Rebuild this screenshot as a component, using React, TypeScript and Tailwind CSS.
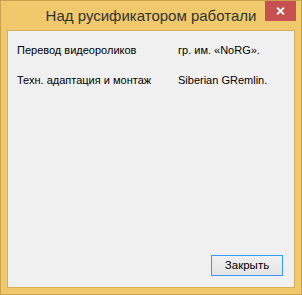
import React from 'react';

const rows = [
  { role: 'Перевод видеороликов', who: 'гр. им. «NoRG».' },
  { role: 'Техн. адаптация и монтаж', who: 'Siberian GRemlin.' },
];

export default function App() {
  return (
    <div className="w-[302px] h-[295px] flex flex-col border border-[#caa24f] bg-[#f0c96c] font-['Liberation_Sans',Arial,sans-serif]">
      {/* Title bar */}
      <div className="relative h-[29px] shrink-0 flex items-center justify-center">
        <span className="text-[15px] text-[#333] pt-[2px]">Над русификатором работали</span>
        <button className="absolute right-[5px] top-0 w-[31px] h-[20px] flex items-center justify-center bg-[#c75050]">
          <svg width="9" height="8" viewBox="0 0 9 8">
            <path d="M1 0.5 L8 7.5 M8 0.5 L1 7.5" stroke="#fff" strokeWidth="1.8" />
          </svg>
        </button>
      </div>

      {/* Client area */}
      <div className="mx-[6px] h-[258px] flex flex-col border border-[#d6ae5c] bg-[#f0f0f0]">
        <div className="grid grid-cols-[161px_1fr] gap-y-[16px] pl-[9px] pt-[12px] text-[11px] text-black">
          {rows.map((r) => (
            <React.Fragment key={r.role}>
              <span className="leading-[14px]">{r.role}</span>
              <span className="leading-[14px]">{r.who}</span>
            </React.Fragment>
          ))}
        </div>
        <div className="mt-auto flex justify-end pr-[11px] pb-[11px]">
          <button className="w-[72px] h-[21px] border border-[#3399ff] bg-gradient-to-b from-[#f0f0f0] to-[#e5e5e5] text-[11.5px] text-black">
            Закрыть
          </button>
        </div>
      </div>
    </div>
  );
}
